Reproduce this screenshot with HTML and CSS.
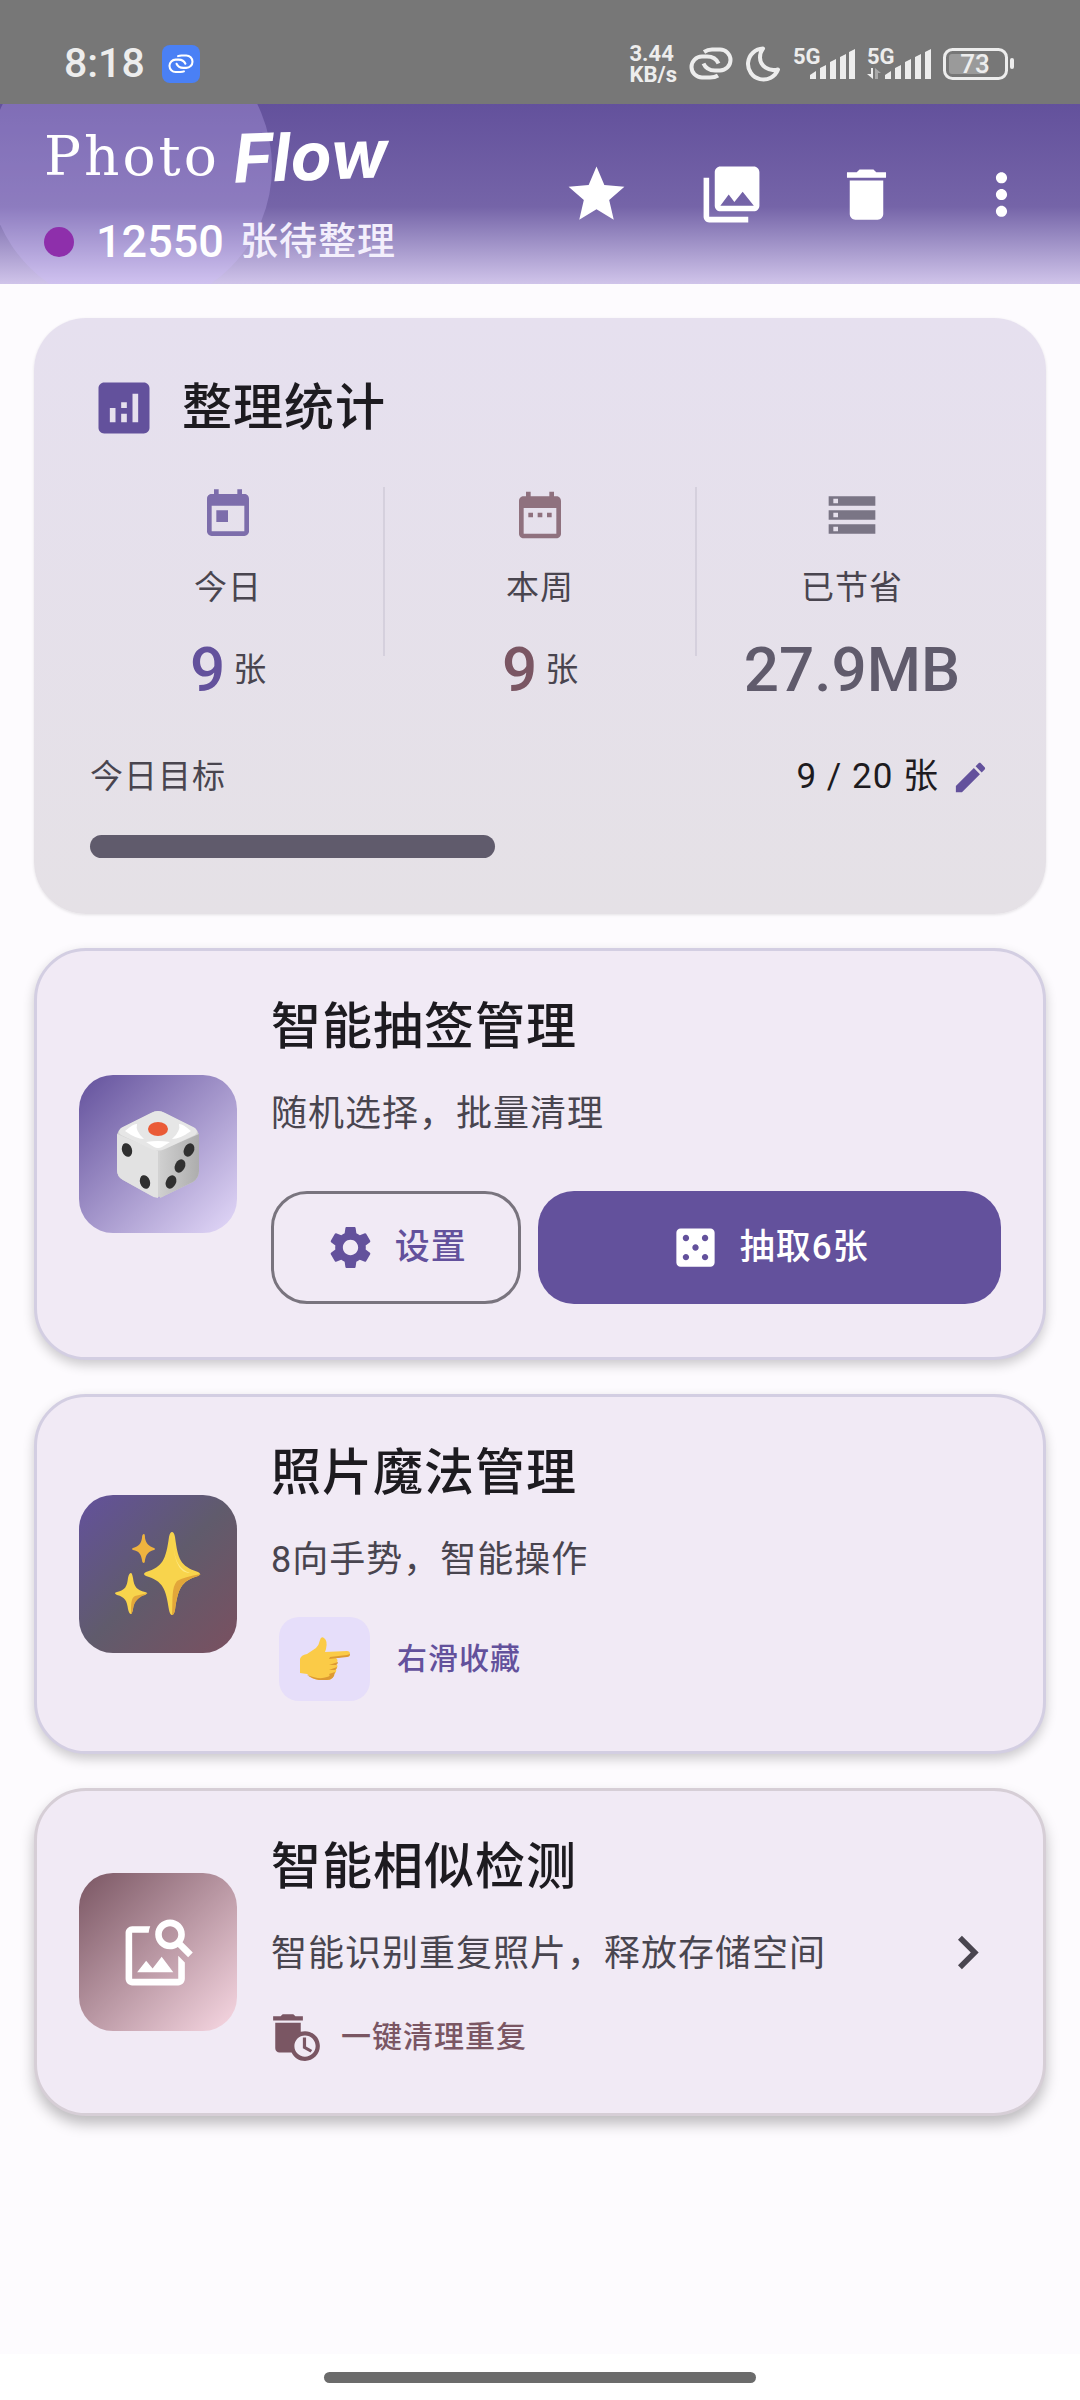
FILE: index.html
```html
<!DOCTYPE html>
<html lang="zh-CN">
<head>
    <meta charset="UTF-8">
    <meta name="viewport" content="width=device-width, initial-scale=1.0">
    <title>Photo Flow</title>
    <link rel="stylesheet" href="styles.css">
</head>
<body>
    <!-- Status bar -->
    <div class="status-bar">
        <span class="clock">8:18</span>
        <svg class="app-badge" viewBox="0 0 38 38">
            <rect width="38" height="38" rx="8" fill="#4a80f5"/>
            <g transform="translate(6 9) scale(.59)" fill="none" stroke="#fff" stroke-width="3.5" stroke-linecap="round">
                <path d="M17 3.500C19 2.500 21 2.500 23 2.500H31a10.500 10.500 0 0 1 0 21H26C20 23.500 16 20 14.500 16.500"/>
                <path d="M27 29.500C25 30.500 23 30.500 21 30.500H13a10.500 10.500 0 0 1 0-21H18C24 9.500 28 13 29.500 16.500"/>
            </g>
        </svg>
        <div class="status-icons">
            <span class="net-speed">3.44<br>KB/s</span>
            <svg width="44" height="34" viewBox="0 0 44 34" fill="none" stroke="#ededed" stroke-width="4">
                <path d="M15 5C18 3 20 2.500 23 2.500H31a10.500 10.500 0 0 1 0 21H26C20 23.500 16 20 14.500 16.500"/>
                <path d="M29 28.500C26 30.500 24 30.500 21 30.500H13a10.500 10.500 0 0 1 0-21H18C24 9.500 28 13 29.500 16.500"/>
            </svg>
            <svg width="36" height="36" viewBox="0 0 36 36" fill="none" stroke="#ededed" stroke-width="4" stroke-linejoin="round">
                <path d="M18 2.500A15.500 15.500 0 1 0 33 23.500C24 26 15 20 15 11.500C15 8 16 5 18 2.500Z"/>
            </svg>
            <svg class="signal" width="62" height="36" viewBox="0 0 62 36" fill="#ededed">
                <text x="0" y="18">5G</text>
                <path d="M17 33V29L23 25V33ZM27 33V22L33 19V33ZM37 33V16L43 13V33ZM47 33V11L53 8V33ZM56 33V6L62 3V33Z"/>
            </svg>
            <svg class="signal" width="64" height="36" viewBox="0 0 64 36" fill="#ededed">
                <text x="0" y="18">5G</text>
                <path d="M4 22H6V33L0 28H4Z"/>
                <path d="M8 33V22L14 27H11V33Z" fill="#aaa"/>
                <path d="M18 33V29L24 25V33ZM28 33V22L34 19V33ZM38 33V16L44 13V33ZM48 33V11L54 8V33ZM58 33V6L64 3V33Z"/>
            </svg>
            <svg class="battery" width="72" height="32" viewBox="0 0 72 32">
                <rect x="1.500" y="1.500" width="62" height="29" rx="8" fill="none" stroke="#ededed" stroke-width="3"/>
                <rect x="6" y="6" width="38" height="20" rx="3" fill="#9a9a9a"/>
                <rect x="67" y="10" width="4" height="11" rx="2" fill="#ededed"/>
                <text x="32" y="25" text-anchor="middle" fill="#ededed">73</text>
            </svg>
        </div>
    </div>

    <!-- Header -->
    <header class="header">
        <div class="brand">
            <h1><span class="brand-photo">Photo</span><span class="brand-flow">Flow</span></h1>
            <p class="pending">
                <span class="dot"></span>
                <span class="pending-count">12550</span>
                <span class="pending-label">张待整理</span>
            </p>
        </div>
        <nav class="toolbar">
            <button class="icon-btn" aria-label="收藏">
                <svg viewBox="0 0 24 24"><path d="M12 17.270L18.180 21l-1.640-7.030L22 9.240l-7.190-.61L12 2 9.190 8.630 2 9.240l5.460 4.730L5.820 21z"/></svg>
            </button>
            <button class="icon-btn" aria-label="相册">
                <svg viewBox="0 0 24 24"><path d="M22 16V4c0-1.100-.9-2-2-2H8c-1.100 0-2 .9-2 2v12c0 1.100.9 2 2 2h12c1.100 0 2-.9 2-2zm-11-4l2.030 2.710L16 11l4 5H8l3-4zM2 6v14c0 1.100.9 2 2 2h14v-2H4V6H2z"/></svg>
            </button>
            <button class="icon-btn" aria-label="回收站">
                <svg viewBox="0 0 24 24"><path d="M6 19c0 1.100.9 2 2 2h8c1.100 0 2-.9 2-2V7H6v12zM19 4h-3.500l-1-1h-5l-1 1H5v2h14V4z"/></svg>
            </button>
            <button class="icon-btn" aria-label="更多">
                <svg viewBox="0 0 24 24"><path d="M12 8c1.100 0 2-.9 2-2s-.9-2-2-2-2 .9-2 2 .9 2 2 2zm0 2c-1.100 0-2 .9-2 2s.9 2 2 2 2-.9 2-2-.9-2-2-2zm0 6c-1.100 0-2 .9-2 2s.9 2 2 2 2-.9 2-2-.9-2-2-2z"/></svg>
            </button>
        </nav>
    </header>

    <main class="content">
        <!-- Stats -->
        <section class="stats">
            <div class="stats-head">
                <svg viewBox="0 0 24 24"><path d="M19 3H5c-1.100 0-2 .9-2 2v14c0 1.100.9 2 2 2h14c1.100 0 2-.9 2-2V5c0-1.100-.9-2-2-2zM9 17H7v-5h2v5zm4 0h-2v-3h2v3zm0-5h-2v-2h2v2zm4 5h-2V7h2v10z"/></svg>
                <h2>整理统计</h2>
            </div>
            <div class="stats-row">
                <div class="stat today">
                    <svg viewBox="0 0 24 24"><path d="M19 3h-1V1h-2v2H8V1H6v2H5c-1.110 0-1.990.9-1.990 2L3 19c0 1.100.89 2 2 2h14c1.100 0 2-.9 2-2V5c0-1.100-.9-2-2-2zm0 16H5V8h14v11zM7 10h5v5H7z"/></svg>
                    <span class="stat-label">今日</span>
                    <p class="stat-value"><strong>9</strong><span>张</span></p>
                </div>
                <div class="divider"></div>
                <div class="stat week">
                    <svg viewBox="0 0 24 24"><path d="M9 11H7v2h2v-2zm4 0h-2v2h2v-2zm4 0h-2v2h2v-2zm2-7h-1V2h-2v2H8V2H6v2H5c-1.110 0-1.990.9-1.990 2L3 20c0 1.100.89 2 2 2h14c1.100 0 2-.9 2-2V6c0-1.100-.9-2-2-2zm0 16H5V9h14v11z"/></svg>
                    <span class="stat-label">本周</span>
                    <p class="stat-value"><strong>9</strong><span>张</span></p>
                </div>
                <div class="divider"></div>
                <div class="stat saved">
                    <svg viewBox="0 0 24 24"><path d="M2 20h20v-4H2v4zm2-3h2v2H4v-2zM2 4v4h20V4H2zm4 3H4V5h2v2zm-4 7h20v-4H2v4zm2-3h2v2H4v-2z"/></svg>
                    <span class="stat-label">已节省</span>
                    <p class="stat-value"><strong>27.9MB</strong></p>
                </div>
            </div>
            <div class="goal">
                <span id="goalLabel">今日目标</span>
                <button class="goal-edit">
                    9 / 20 张
                    <svg viewBox="0 0 24 24"><path d="M3 17.250V21h3.750L17.810 9.940l-3.750-3.750L3 17.250zM20.710 7.040c.39-.39.39-1.020 0-1.410l-2.340-2.340c-.39-.39-1.020-.39-1.410 0l-1.830 1.830 3.750 3.750 1.830-1.830z"/></svg>
                </button>
            </div>
            <div class="progress" role="progressbar" aria-labelledby="goalLabel" aria-valuenow="45" aria-valuemin="0" aria-valuemax="100">
                <div class="progress-fill" style="width: 45%"></div>
            </div>
        </section>

        <!-- Random pick -->
        <section class="card">
            <div class="tile tile-draw">
                <svg width="84" height="90" viewBox="0 0 84 90">
                    <defs>
                        <linearGradient id="diceRight" x1="0" y1="0" x2="1" y2="0">
                            <stop offset="0" stop-color="#cfcfcf"/>
                            <stop offset="1" stop-color="#adadad"/>
                        </linearGradient>
                    </defs>
                    <path d="M35 4Q42 0 49 4L77 18Q83 21 83 28V62Q83 69 77 73L50 86Q42 90 34 86L7 71Q1 68 1 61V28Q1 21 7 18Z" fill="#d2d2d2"/>
                    <path d="M1 25L42 42V89Q38 89 34 86L7 71Q1 68 1 61Z" fill="#e2e2e2"/>
                    <path d="M83 25L44 42V89Q47 88 50 86L77 73Q83 69 83 62Z" fill="url(#diceRight)"/>
                    <path d="M35 4Q42 0 49 4L79 19Q83 23 79 26L49 40Q42 43 35 40L5 26Q1 23 5 19Z" fill="#e6e6e6"/>
                    <path d="M9 22Q18 14 21 15Q19 22 28 30Q20 30 9 22ZM75 22Q66 14 63 15Q65 22 56 30Q64 30 75 22ZM30 33Q42 31 54 33L46 38Q42 40 38 38Z" fill="#fff"/>
                    <ellipse cx="42" cy="20" rx="10" ry="7" fill="#ea5a36"/>
                    <g fill="#303030">
                        <ellipse cx="11" cy="41" rx="5" ry="7" transform="rotate(-18 11 41)"/>
                        <ellipse cx="29" cy="73" rx="5" ry="7" transform="rotate(-18 29 73)"/>
                        <ellipse cx="73" cy="41" rx="5" ry="7" transform="rotate(25 73 41)"/>
                        <ellipse cx="64" cy="57" rx="5" ry="7" transform="rotate(25 64 57)"/>
                        <ellipse cx="55" cy="73" rx="5" ry="7" transform="rotate(25 55 73)"/>
                    </g>
                </svg>
            </div>
            <div class="card-body">
                <h2>智能抽签管理</h2>
                <p class="desc">随机选择，批量清理</p>
                <div class="actions">
                    <button class="btn btn-outline">
                        <svg viewBox="0 0 24 24"><path d="M19.140 12.940c.04-.3.06-.61.06-.94 0-.32-.02-.64-.07-.94l2.030-1.580c.18-.14.23-.41.12-.61l-1.920-3.320c-.12-.22-.37-.29-.59-.22l-2.390.96c-.5-.38-1.030-.7-1.620-.94l-.36-2.540c-.04-.24-.24-.41-.48-.41h-3.840c-.24 0-.43.17-.47.41l-.36 2.540c-.59.24-1.130.57-1.620.94l-2.390-.96c-.22-.08-.47 0-.59.22L2.740 8.870c-.12.21-.08.47.12.61l2.030 1.580c-.05.3-.09.63-.09.94s.02.64.07.94l-2.030 1.580c-.18.14-.23.41-.12.61l1.920 3.320c.12.22.37.29.59.22l2.390-.96c.5.38 1.030.7 1.620.94l.36 2.540c.05.24.24.41.48.41h3.840c.24 0 .44-.17.47-.41l.36-2.540c.59-.24 1.130-.56 1.620-.94l2.390.96c.22.08.47 0 .59-.22l1.920-3.320c.12-.22.07-.47-.12-.61l-2.010-1.580zM12 15.600c-1.980 0-3.600-1.620-3.600-3.600s1.620-3.600 3.600-3.600 3.600 1.620 3.600 3.600-1.620 3.600-3.600 3.600z"/></svg>
                        设置
                    </button>
                    <button class="btn btn-primary">
                        <svg viewBox="0 0 24 24"><path fill-rule="evenodd" d="M19 3H5c-1.100 0-2 .9-2 2v14c0 1.100.9 2 2 2h14c1.100 0 2-.9 2-2V5c0-1.100-.9-2-2-2zM7.500 18c-.83 0-1.500-.67-1.500-1.500S6.670 15 7.500 15s1.500.67 1.500 1.500S8.330 18 7.500 18zm0-9C6.670 9 6 8.330 6 7.500S6.670 6 7.500 6 9 6.670 9 7.500 8.330 9 7.500 9zm4.500 4.500c-.83 0-1.500-.67-1.500-1.500s.67-1.500 1.500-1.500 1.500.67 1.500 1.500-.67 1.500-1.500 1.500zm4.500 4.500c-.83 0-1.500-.67-1.500-1.500s.67-1.500 1.500-1.500 1.500.67 1.500 1.500-.67 1.500-1.500 1.500zm0-9c-.83 0-1.500-.67-1.500-1.500S15.670 6 16.500 6s1.500.67 1.500 1.500S17.330 9 16.500 9z"/></svg>
                        抽取6张
                    </button>
                </div>
            </div>
        </section>

        <!-- Gestures -->
        <section class="card">
            <div class="tile tile-magic">
                <svg width="88" height="86" viewBox="0 0 88 86">
                    <path d="M58 1Q60 1 61 6C64 28 66 35 84 41Q88 43 84 45C67 50 64 58 61 79Q60 84 58 84Q56 84 55 79C52 58 49 50 32 45Q28 43 32 41C49 36 52 28 55 6Q56 1 58 1Z" fill="#f8d44c"/>
                    <path d="M84 45C67 50 64 58 61 79Q60 84 58 84C59 70 57 57 63 50Q70 46 87 43Z" fill="#e2a63a"/>
                    <path d="M59 12C61 32 66 38 76 42C67 42 61 34 59 12Z" fill="#fde884"/>
                    <path d="M17 42Q18 42 19 47C20 56 23 59 31 61Q35 62 31 64C23 66 20 70 19 78Q18 83 17 83Q15 83 14 78C13 70 11 66 3 64Q-1 62 3 61C11 59 13 56 14 47Q15 42 17 42Z" fill="#f8d44c"/>
                    <path d="M34 62C25 66 20 70 19 78Q18 83 17 83C17 73 17 67 21 65Z" fill="#e2a63a"/>
                    <path d="M30 3Q31 3 31 7C32 13 35 15 40 17Q42 18 40 19C35 20 32 23 31 29Q31 32 30 32Q28 32 28 29C27 23 25 20 19 19Q17 18 19 17C25 15 27 13 28 7Q28 3 30 3Z" fill="#efb33f"/>
                </svg>
            </div>
            <div class="card-body">
                <h2>照片魔法管理</h2>
                <p class="desc">8向手势，智能操作</p>
                <div class="hint gesture">
                    <span class="chip">
                        <svg width="52" height="44" viewBox="0 0 52 44">
                            <path d="M1 22Q2 18 8 17L17 11Q20 8 21 3Q22-1 25 1Q29 4 27 12L26 15L48 14Q51 14 51 17Q51 19 48 19L37 21Q40 23 37 27Q40 29 37 32Q38 35 35 37Q34 43 28 43H20Q13 42 8 37L1 36Z" fill="#fbcb47"/>
                            <path d="M51 17Q51 20 48 20L30 22L31 20L48 18ZM39 25Q39 27 37 28L30 28ZM38 30Q38 32 36 33L30 33ZM36 35Q35 43 28 43H20Q13 42 8 38Q20 43 28 40Q32 39 30 37Z" fill="#dd9a32"/>
                        </svg>
                    </span>
                    <span>右滑收藏</span>
                </div>
            </div>
        </section>

        <!-- Similar photos -->
        <section class="card card-similar">
            <div class="tile tile-similar">
                <svg class="tile-icon" viewBox="0 0 24 24"><path d="M18 13v7H4V6h5.020c.05-.71.22-1.380.48-2H4c-1.100 0-2 .9-2 2v14c0 1.100.9 2 2 2h14c1.100 0 2-.9 2-2v-5l-2-2zm-1.500 5h-11l2.750-3.530 1.960 2.360 2.750-3.540zm2.800-9.110c.44-.7.7-1.510.7-2.390C20 4.010 17.990 2 15.500 2S11 4.010 11 6.500s2.010 4.500 4.490 4.500c.88 0 1.700-.26 2.390-.7L21 13.420 22.420 12 19.300 8.890zM15.500 9C14.120 9 13 7.880 13 6.500S14.120 4 15.500 4 18 5.120 18 6.500 16.880 9 15.500 9z"/></svg>
            </div>
            <div class="card-body">
                <h2>智能相似检测</h2>
                <p class="desc">智能识别重复照片，释放存储空间</p>
                <div class="hint cleanup">
                    <svg viewBox="0 0 24 24"><path d="M15 2h-3.500l-1-1h-5l-1 1H1v2h14V2zM16 9c-.7 0-1.370.1-2 .29V5H2v12c0 1.100.9 2 2 2h5.680c1.120 2.360 3.530 4 6.320 4 3.870 0 7-3.130 7-7s-3.130-7-7-7zm0 12c-2.760 0-5-2.240-5-5s2.240-5 5-5 5 2.240 5 5-2.240 5-5 5zM16.500 12H15v5l3.600 2.100.8-1.200-2.900-1.700z"/></svg>
                    <span>一键清理重复</span>
                </div>
            </div>
            <button class="chevron" aria-label="打开">
                <svg viewBox="0 0 24 24"><path d="M10 6L8.590 7.410 13.170 12l-4.580 4.590L10 18l6-6z"/></svg>
            </button>
        </section>
    </main>

    <footer class="nav-bar"><div class="nav-handle"></div></footer>
</body>
</html>
```
FILE: styles.css
```css
* {
    box-sizing: border-box;
}

body {
    min-height: 100vh;
    margin: 0;
    display: flex;
    flex-direction: column;
    font-family: Roboto, 'Noto Sans CJK SC', sans-serif;
    line-height: 1.2;
    background: #fdfbfe;
    color: #1d1b20;
}

h1, h2, p {
    margin: 0;
}

svg {
    display: block;
    flex-shrink: 0;
    overflow: visible;
}

button {
    padding: 0;
    border: none;
    background: none;
    font-family: inherit;
    line-height: inherit;
    color: inherit;
    cursor: pointer;
}

button svg {
    fill: currentColor;
}

/* Status bar */
.status-bar {
    display: flex;
    align-items: center;
    height: 104px;
    padding: 24px 65px 0 64px;
    background: #777;
    color: #ededed;
}

.clock {
    font-size: 41px;
    font-weight: 500;
}

.app-badge {
    width: 38px;
    height: 38px;
    margin-left: 17px;
}

.status-icons {
    margin-left: auto;
    display: flex;
    align-items: center;
    gap: 12px;
}

.net-speed {
    font-size: 22px;
    line-height: 21px;
    font-weight: 700;
}

.signal text {
    font-size: 22px;
    font-weight: 700;
}

.battery text {
    font-size: 26px;
    font-weight: 500;
}

/* Header */
.header {
    position: relative;
    overflow: hidden;
    display: flex;
    justify-content: space-between;
    height: 180px;
    padding: 0 11px 0 44px;
    background: linear-gradient(#63519c 0%, #7564a8 57%, #9486bf 72%, #d0c4ea 100%);
    color: white;
}

.header::before {
    content: '';
    position: absolute;
    left: -12px;
    top: -79px;
    width: 284px;
    height: 284px;
    border-radius: 50%;
    background: rgba(207, 189, 255, 0.27);
}

.brand {
    position: relative;
    padding-top: 12px;
}

h1 {
    display: flex;
    align-items: center;
    gap: 13px;
    height: 80px;
    line-height: 80px;
    font-weight: 400;
}

.brand-photo {
    font-family: 'DejaVu Serif', serif;
    font-size: 55px;
    letter-spacing: 3px;
}

.brand-flow {
    font-family: Inter, sans-serif;
    font-size: 67px;
    font-weight: 700;
    font-style: italic;
    transform: rotate(-2deg);
}

.pending {
    display: flex;
    align-items: center;
    height: 92px;
}

.dot {
    width: 30px;
    height: 30px;
    border-radius: 50%;
    background: #8e2fab;
}

.pending-count {
    margin-left: 22px;
    font-size: 45px;
    font-weight: 500;
}

.pending-label {
    margin-left: 16px;
    font-size: 38px;
    font-weight: 500;
    letter-spacing: 1px;
    color: #f3effc;
}

.toolbar {
    position: relative;
    display: flex;
    align-items: center;
}

.icon-btn {
    width: 135px;
    height: 132px;
    display: flex;
    align-items: center;
    justify-content: center;
}

.icon-btn svg,
.chevron svg {
    width: 67px;
    height: 67px;
}

/* Content */
.content {
    flex: 1;
    display: flex;
    flex-direction: column;
    gap: 34px;
    padding: 34px;
}

h2 {
    font-size: 50px;
    font-weight: 500;
    line-height: 68px;
    letter-spacing: 1px;
}

/* Stats */
.stats {
    padding: 56px;
    border-radius: 52px;
    background: linear-gradient(#e6e0ef, #e5e1e6);
    box-shadow: 0 1px 3px rgba(0, 0, 0, 0.1);
}

.stats-head {
    display: flex;
    align-items: center;
    gap: 24px;
}

.stats-head svg {
    width: 68px;
    height: 68px;
    fill: #63519c;
}

.stats-row {
    display: flex;
    gap: 17px;
    margin-top: 45px;
}

.divider {
    width: 2px;
    height: 169px;
    background: #d5d0dd;
}

.stat {
    flex: 1;
    display: flex;
    flex-direction: column;
    align-items: center;
}

.stat svg {
    width: 56px;
    height: 56px;
    fill: currentColor;
    opacity: 0.8;
}

.stat-label {
    margin-top: 21px;
    font-size: 33px;
    line-height: 48px;
    letter-spacing: 1px;
    color: #49454f;
}

.stat-value {
    display: flex;
    align-items: center;
    gap: 8px;
    height: 80px;
    margin-top: 18px;
}

.stat-value strong {
    font-size: 62px;
    font-weight: 500;
}

.stat-value span {
    font-size: 33px;
    color: #49454f;
}

.today {
    color: #63519c;
}

.week {
    color: #7a5663;
}

.saved {
    color: #605b6c;
}

.goal {
    display: flex;
    justify-content: space-between;
    align-items: center;
    height: 48px;
    margin-top: 43px;
    font-size: 33px;
    letter-spacing: 1px;
    color: #49454f;
}

.goal-edit {
    display: flex;
    align-items: center;
    gap: 12px;
    font-size: 35px;
    letter-spacing: 1px;
    color: #1d1b20;
}

.goal-edit svg {
    width: 39px;
    height: 39px;
    fill: #63519c;
}

.progress {
    height: 23px;
    margin-top: 34px;
}

.progress-fill {
    height: 100%;
    border-radius: 12px;
    background: #605b6c;
}

/* Cards */
.card {
    display: flex;
    align-items: center;
    gap: 34px;
    padding: 42px;
    border: 3px solid #d3cee2;
    border-radius: 52px;
    background: #f1eaf5;
    box-shadow: 0 5px 12px rgba(0, 0, 0, 0.2);
}

.card-similar {
    border-color: #d6ced6;
    box-shadow: 0 8px 14px rgba(0, 0, 0, 0.25);
}

.tile {
    flex-shrink: 0;
    width: 158px;
    height: 158px;
    border-radius: 34px;
    display: flex;
    align-items: center;
    justify-content: center;
}

.tile-draw {
    background: linear-gradient(135deg, #63519c, #e3d9f9);
}

.tile-magic {
    background: linear-gradient(135deg, #63519c, #605b6c 50%, #7a5060);
}

.tile-similar {
    background: linear-gradient(135deg, #7a5663, #f8d8e3);
}

.tile-icon {
    width: 79px;
    height: 79px;
    fill: white;
}

.card-body {
    flex: 1;
}

.desc {
    margin-top: 25px;
    font-size: 36px;
    line-height: 56px;
    letter-spacing: 1px;
    color: #49454f;
}

.actions {
    display: grid;
    grid-template-columns: 35fr 65fr;
    gap: 17px;
    margin: 49px 0 11px;
}

.btn {
    display: flex;
    align-items: center;
    justify-content: center;
    gap: 19px;
    height: 113px;
    border-radius: 36px;
    font-size: 35px;
    font-weight: 500;
    letter-spacing: 1px;
}

.btn svg {
    width: 51px;
    height: 51px;
}

.btn-outline {
    border: 3px solid #79747e;
    color: #63519c;
}

.btn-primary {
    background: #63519c;
    color: white;
}

.hint {
    display: flex;
    align-items: center;
    margin-top: 21px;
    font-size: 30px;
    font-weight: 500;
    letter-spacing: 1px;
}

.gesture {
    gap: 27px;
    padding: 8px;
    color: #63519c;
}

.chip {
    width: 91px;
    height: 84px;
    border-radius: 20px;
    background: #e6defa;
    display: flex;
    align-items: center;
    justify-content: center;
}

.cleanup {
    gap: 19px;
    height: 68px;
    color: #7a5663;
}

.cleanup svg {
    width: 51px;
    height: 51px;
    fill: currentColor;
}

.chevron {
    color: #49454f;
}

/* Gesture nav */
.nav-bar {
    height: 46px;
    padding-top: 18px;
    background: white;
}

.nav-handle {
    width: 40%;
    height: 11px;
    margin: 0 auto;
    border-radius: 6px;
    background: #6b6b6b;
}
```
